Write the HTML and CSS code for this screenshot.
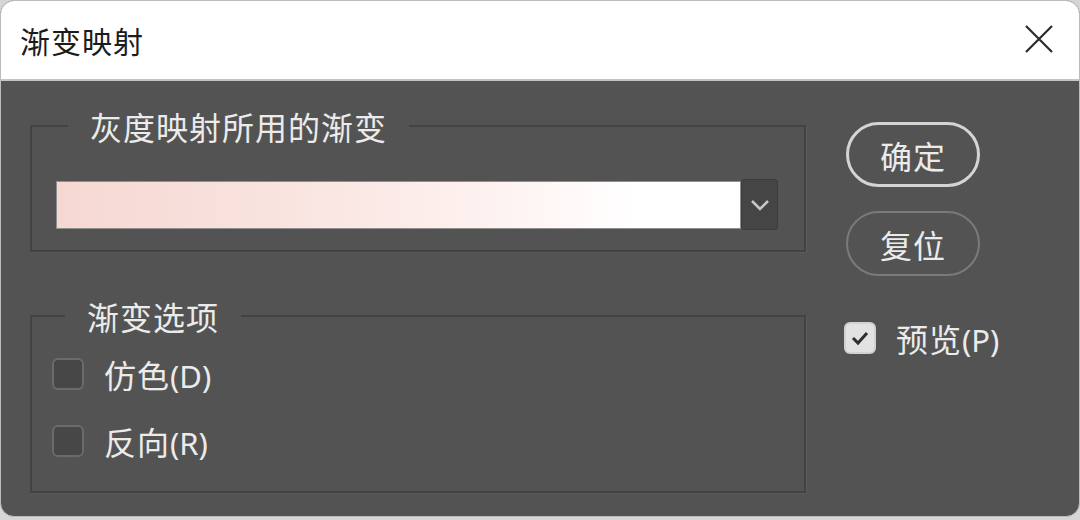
FILE: index.html
```html
<!DOCTYPE html>
<html lang="zh-CN">

<head>
    <meta charset="UTF-8">
    <meta name="viewport" content="width=device-width, initial-scale=1.0">
    <title>渐变映射</title>
    <link rel="stylesheet" href="styles.css">
</head>

<body>
    <div class="dialog">
        <header class="dialog-titlebar">
            <h1 class="dialog-title">渐变映射</h1>
            <button class="dialog-close" aria-label="关闭">
                <svg width="28" height="28" viewBox="0 0 28 28">
                    <path d="M1 1 L27 27 M27 1 L1 27" stroke="#2b2b2b" stroke-width="2.2" fill="none" />
                </svg>
            </button>
        </header>

        <main class="dialog-body">
            <div class="dialog-main">
                <fieldset class="group group-gradient">
                    <legend class="group-legend">灰度映射所用的渐变</legend>
                    <div class="gradient-row">
                        <div class="gradient-bar"></div>
                        <button class="gradient-dropdown" aria-label="选择渐变">
                            <svg class="chevron" width="20" height="12" viewBox="0 0 20 12">
                                <path d="M2 2 L10 10 L18 2" stroke="#c8c8c8" stroke-width="2.6" fill="none" />
                            </svg>
                        </button>
                    </div>
                </fieldset>

                <fieldset class="group group-options">
                    <legend class="group-legend">渐变选项</legend>
                    <label class="check-row">
                        <span class="checkbox"></span>
                        <span class="check-label">仿色<span class="key">(D)</span></span>
                    </label>
                    <label class="check-row">
                        <span class="checkbox"></span>
                        <span class="check-label">反向<span class="key">(R)</span></span>
                    </label>
                </fieldset>
            </div>

            <aside class="dialog-side">
                <button class="pill-button pill-button-primary">确定</button>
                <button class="pill-button">复位</button>
                <label class="check-row check-row-preview">
                    <span class="checkbox checkbox-checked">
                        <svg width="20" height="16" viewBox="0 0 20 16">
                            <path d="M3 8 L8 13 L17 3" stroke="#2e2e2e" stroke-width="3" fill="none" />
                        </svg>
                    </span>
                    <span class="check-label">预览<span class="key">(P)</span></span>
                </label>
            </aside>
        </main>
    </div>
</body>

</html>
```

FILE: styles.css
```css
:root {
    --panel-bg: #535353;
    --group-border: #434343;
    --text-light: #ebebeb;
}

body {
    margin: 0;
    padding: 0;
    background: #d6d6d6;
    font-family: "Noto Sans CJK SC", "Noto Sans", sans-serif;
}

h1 {
    margin: 0;
}

button {
    font-family: inherit;
    cursor: pointer;
}

.dialog {
    box-sizing: border-box;
    width: 1080px;
    height: 517px;
    display: flex;
    flex-direction: column;
    border: 1px solid #bcbcbc;
    border-radius: 14px;
    overflow: hidden;
    background: var(--panel-bg);
}

.dialog-titlebar {
    height: 78px;
    display: flex;
    align-items: center;
    justify-content: space-between;
    padding: 0 26px 0 19px;
    background: #ffffff;
    border-bottom: 2px solid #c4c4c4;
}

.dialog-title {
    font-size: 30px;
    font-weight: normal;
    color: #1c1c1c;
    letter-spacing: 1px;
}

.dialog-close {
    display: flex;
    padding: 0;
    border: none;
    background: none;
    margin-top: -2px;
}

.dialog-body {
    flex: 1;
    display: flex;
    align-items: flex-start;
    gap: 40px;
    padding: 25px 0 0 29px;
    color: var(--text-light);
}

.dialog-main {
    width: 776px;
    display: flex;
    flex-direction: column;
    gap: 44px;
}

.group {
    margin: 0;
    border: 2px solid var(--group-border);
    box-shadow: 1px 1px 0 #5a5a5a;
}

.group-legend {
    margin-left: 12px;
    padding: 0 22px;
    font-size: 32px;
    line-height: 40px;
    letter-spacing: 1px;
}

.group-gradient {
    padding: 33px 26px 20px 24px;
}

.gradient-row {
    display: flex;
    align-items: center;
}

.gradient-bar {
    width: 683px;
    height: 46px;
    border: 1px solid #8e8e8e;
    background: linear-gradient(to right, #f6d8d2 0%, #f9e3df 32%, #fdf0ee 60%, #ffffff 85%);
}

.gradient-dropdown {
    width: 37px;
    height: 51px;
    display: flex;
    align-items: center;
    justify-content: center;
    padding: 0;
    background: #454545;
    border: 1px solid #3c3c3c;
    border-radius: 3px;
}

.chevron {
    flex: none;
    width: 20px;
    height: 12px;
}

.group-options {
    display: flex;
    flex-direction: column;
    gap: 23px;
    padding: 16px 20px 28px 20px;
}

.group-options .group-legend {
    margin-left: 13px;
}

.check-row {
    display: flex;
    align-items: center;
    gap: 20px;
    height: 44px;
    font-size: 32px;
    cursor: pointer;
}

.checkbox {
    box-sizing: border-box;
    width: 32px;
    height: 32px;
    display: flex;
    align-items: center;
    justify-content: center;
    border: 2px solid #6b6b6b;
    border-radius: 6px;
    background: #474747;
}

.checkbox-checked {
    background: #e2e2e2;
    border-color: #d2d2d2;
}

.check-label {
    letter-spacing: 1px;
}

.key {
    font-family: "Noto Sans", "Open Sans", sans-serif;
    font-size: 31px;
    letter-spacing: 0;
}

.dialog-side {
    display: flex;
    flex-direction: column;
    align-items: flex-start;
    margin-top: 16px;
}

.pill-button {
    box-sizing: border-box;
    width: 134px;
    height: 65px;
    padding: 0;
    margin-bottom: 24px;
    border: 2px solid #7a7a7a;
    border-radius: 33px;
    background: none;
    color: var(--text-light);
    font-size: 32px;
    letter-spacing: 1px;
}

.pill-button-primary {
    border: 3px solid #d4d4d4;
}

.check-row-preview {
    margin-top: 16px;
    margin-left: -2px;
}
```
